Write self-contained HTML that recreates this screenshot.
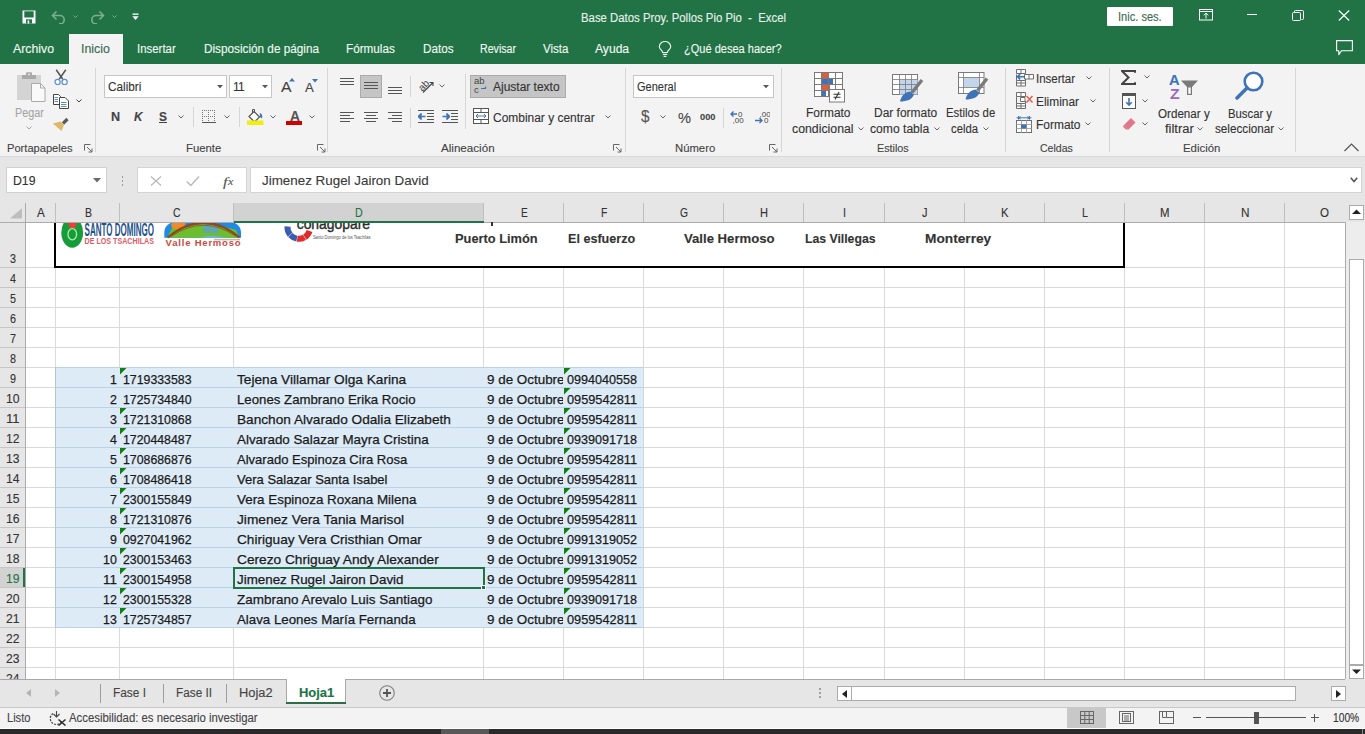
<!DOCTYPE html>
<html><head><meta charset="utf-8"><title>Excel</title>
<style>
html,body{margin:0;padding:0;}
body{width:1365px;height:734px;overflow:hidden;position:relative;background:#F3F3F3;font-family:'Liberation Sans', sans-serif;}
body>div,body>svg{position:absolute;box-sizing:border-box;}
.t{white-space:pre;transform-origin:0 0;-webkit-text-stroke:0.12px;}
</style></head><body>
<div style="left:0px;top:0px;width:1365px;height:64px;background:#217346;"></div>
<div style="left:69px;top:34px;width:54px;height:30px;background:#F3F3F3;"></div>
<div class="t" style="left:581.00px;top:11.64px;font-size:12px;line-height:12px;color:#E9F1EC;font-weight:normal;transform:scaleX(0.9467);">Base Datos Proy. Pollos Pio Pio  -  Excel</div>
<div style="left:1107px;top:7px;width:66px;height:19px;background:#FFFFFF;border-radius:1px"></div>
<div class="t" style="left:1118.00px;top:10.64px;font-size:12px;line-height:12px;color:#3D6B50;font-weight:normal;transform:scaleX(0.9227);">Inic. ses.</div>
<div class="t" style="left:13.00px;top:42.84px;font-size:12px;line-height:12px;color:#F2F8F3;font-weight:normal;transform:scaleX(1.0246);">Archivo</div>
<div class="t" style="left:81.00px;top:42.84px;font-size:12px;line-height:12px;color:#3B6A4F;font-weight:normal;transform:scaleX(1.0351);">Inicio</div>
<div class="t" style="left:137.30px;top:42.84px;font-size:12px;line-height:12px;color:#F2F8F3;font-weight:normal;transform:scaleX(0.9512);">Insertar</div>
<div class="t" style="left:203.70px;top:42.84px;font-size:12px;line-height:12px;color:#F2F8F3;font-weight:normal;transform:scaleX(0.9794);">Disposición de página</div>
<div class="t" style="left:346.40px;top:42.84px;font-size:12px;line-height:12px;color:#F2F8F3;font-weight:normal;transform:scaleX(0.9757);">Fórmulas</div>
<div class="t" style="left:422.50px;top:42.84px;font-size:12px;line-height:12px;color:#F2F8F3;font-weight:normal;transform:scaleX(0.9726);">Datos</div>
<div class="t" style="left:480.00px;top:42.84px;font-size:12px;line-height:12px;color:#F2F8F3;font-weight:normal;transform:scaleX(0.8848);">Revisar</div>
<div class="t" style="left:543.00px;top:42.84px;font-size:12px;line-height:12px;color:#F2F8F3;font-weight:normal;transform:scaleX(0.9596);">Vista</div>
<div class="t" style="left:595.30px;top:42.84px;font-size:12px;line-height:12px;color:#F2F8F3;font-weight:normal;transform:scaleX(1.0085);">Ayuda</div>
<div class="t" style="left:684.20px;top:42.84px;font-size:12px;line-height:12px;color:#F2F8F3;font-weight:normal;transform:scaleX(0.9201);">¿Qué desea hacer?</div>
<div style="left:0px;top:64px;width:1365px;height:92px;background:#F3F3F3;"></div>
<div style="left:0px;top:156px;width:1365px;height:1px;background:#D9D9D9;"></div>
<div style="left:0px;top:157px;width:1365px;height:46px;background:#E6E6E6;"></div>
<div style="left:95px;top:68px;width:1px;height:84px;background:#D6D6D6;"></div>
<div style="left:327px;top:68px;width:1px;height:84px;background:#D6D6D6;"></div>
<div style="left:625px;top:68px;width:1px;height:84px;background:#D6D6D6;"></div>
<div style="left:781px;top:68px;width:1px;height:84px;background:#D6D6D6;"></div>
<div style="left:1005px;top:68px;width:1px;height:84px;background:#D6D6D6;"></div>
<div style="left:1109px;top:68px;width:1px;height:84px;background:#D6D6D6;"></div>
<div style="left:1295px;top:68px;width:1px;height:84px;background:#D6D6D6;"></div>
<div class="t" style="left:6.50px;top:142.69px;font-size:11px;line-height:11px;color:#444444;font-weight:normal;transform:scaleX(1.0104);">Portapapeles</div>
<div class="t" style="left:185.50px;top:142.69px;font-size:11px;line-height:11px;color:#444444;font-weight:normal;transform:scaleX(1.0277);">Fuente</div>
<div class="t" style="left:441.20px;top:142.69px;font-size:11px;line-height:11px;color:#444444;font-weight:normal;transform:scaleX(1.0558);">Alineación</div>
<div class="t" style="left:675.00px;top:142.69px;font-size:11px;line-height:11px;color:#444444;font-weight:normal;transform:scaleX(1.0275);">Número</div>
<div class="t" style="left:877.30px;top:142.69px;font-size:11px;line-height:11px;color:#444444;font-weight:normal;transform:scaleX(0.9782);">Estilos</div>
<div class="t" style="left:1040.20px;top:142.69px;font-size:11px;line-height:11px;color:#444444;font-weight:normal;transform:scaleX(0.9577);">Celdas</div>
<div class="t" style="left:1183.30px;top:142.69px;font-size:11px;line-height:11px;color:#444444;font-weight:normal;transform:scaleX(1.0366);">Edición</div>
<div class="t" style="left:14.60px;top:106.84px;font-size:12px;line-height:12px;color:#A6A6A6;font-weight:normal;transform:scaleX(0.9022);">Pegar</div>
<svg style="left:26.0px;top:126.25px;" width="6" height="3.5" viewBox="0 0 6 3.5"><polyline points="0.5,0.5 3.0,3.0 5.5,0.5" fill="none" stroke="#A6A6A6" stroke-width="1"/></svg>
<svg style="left:76.0px;top:99.25px;" width="6" height="3.5" viewBox="0 0 6 3.5"><polyline points="0.5,0.5 3.0,3.0 5.5,0.5" fill="none" stroke="#444" stroke-width="1"/></svg>
<div style="left:104px;top:75px;width:123px;height:23px;background:#FFFFFF;border:1px solid #C6C6C6"></div>
<div class="t" style="left:107.70px;top:80.54px;font-size:12px;line-height:12px;color:#333333;font-weight:normal;transform:scaleX(0.9790);">Calibri</div>
<div style="left:229px;top:75px;width:43px;height:23px;background:#FFFFFF;border:1px solid #C6C6C6"></div>
<div class="t" style="left:233.00px;top:80.54px;font-size:12px;line-height:12px;color:#333333;font-weight:normal;letter-spacing:-0.9px;">11</div>
<div class="t" style="left:110.50px;top:110.84px;font-size:12px;line-height:12px;color:#444;font-weight:bold;transform:scaleX(1.0494);">N</div>
<div class="t" style="left:134.00px;top:110.84px;font-size:12px;line-height:12px;color:#444;font-weight:bold;transform:scaleX(0.9802);font-style:italic;">K</div>
<div class="t" style="left:159.00px;top:110.84px;font-size:12px;line-height:12px;color:#444;font-weight:bold;transform:scaleX(0.9981);">S</div>
<div style="left:159px;top:122px;width:8px;height:1px;background:#444;"></div>
<svg style="left:178.0px;top:115.25px;" width="6" height="3.5" viewBox="0 0 6 3.5"><polyline points="0.5,0.5 3.0,3.0 5.5,0.5" fill="none" stroke="#666" stroke-width="1"/></svg>
<svg style="left:224.0px;top:115.25px;" width="6" height="3.5" viewBox="0 0 6 3.5"><polyline points="0.5,0.5 3.0,3.0 5.5,0.5" fill="none" stroke="#666" stroke-width="1"/></svg>
<svg style="left:270.0px;top:115.25px;" width="6" height="3.5" viewBox="0 0 6 3.5"><polyline points="0.5,0.5 3.0,3.0 5.5,0.5" fill="none" stroke="#666" stroke-width="1"/></svg>
<svg style="left:309.0px;top:115.25px;" width="6" height="3.5" viewBox="0 0 6 3.5"><polyline points="0.5,0.5 3.0,3.0 5.5,0.5" fill="none" stroke="#666" stroke-width="1"/></svg>
<div style="left:193px;top:107px;width:1px;height:20px;background:#D6D6D6;"></div>
<div style="left:239px;top:107px;width:1px;height:20px;background:#D6D6D6;"></div>
<div style="left:360px;top:75px;width:22px;height:23px;background:#C5C5C5;border:1px solid #ABABAB"></div>
<div style="left:470px;top:75px;width:96px;height:23px;background:#C5C5C5;border:1px solid #ABABAB"></div>
<div class="t" style="left:492.60px;top:81.14px;font-size:12px;line-height:12px;color:#333333;font-weight:normal;transform:scaleX(0.9985);">Ajustar texto</div>
<div class="t" style="left:492.60px;top:112.34px;font-size:12px;line-height:12px;color:#333333;font-weight:normal;transform:scaleX(0.9966);">Combinar y centrar</div>
<svg style="left:605.4px;top:115.25px;" width="6" height="3.5" viewBox="0 0 6 3.5"><polyline points="0.5,0.5 3.0,3.0 5.5,0.5" fill="none" stroke="#666" stroke-width="1"/></svg>
<svg style="left:439.0px;top:84.25px;" width="6" height="3.5" viewBox="0 0 6 3.5"><polyline points="0.5,0.5 3.0,3.0 5.5,0.5" fill="none" stroke="#666" stroke-width="1"/></svg>
<div style="left:410px;top:76px;width:1px;height:21px;background:#D6D6D6;"></div>
<div style="left:410px;top:108px;width:1px;height:20px;background:#D6D6D6;"></div>
<div style="left:465px;top:74px;width:1px;height:55px;background:#D6D6D6;"></div>
<div style="left:633px;top:75px;width:141px;height:23px;background:#FFFFFF;border:1px solid #C6C6C6"></div>
<div class="t" style="left:637.00px;top:80.64px;font-size:12px;line-height:12px;color:#333333;font-weight:normal;transform:scaleX(0.9180);">General</div>
<svg style="left:659.5px;top:115.25px;" width="6" height="3.5" viewBox="0 0 6 3.5"><polyline points="0.5,0.5 3.0,3.0 5.5,0.5" fill="none" stroke="#666" stroke-width="1"/></svg>
<div style="left:723px;top:108px;width:1px;height:20px;background:#D6D6D6;"></div>
<div class="t" style="left:805.80px;top:107.04px;font-size:12px;line-height:12px;color:#333333;font-weight:normal;transform:scaleX(0.9958);">Formato</div>
<div class="t" style="left:792.20px;top:123.04px;font-size:12px;line-height:12px;color:#333333;font-weight:normal;transform:scaleX(1.0259);">condicional</div>
<svg style="left:858.0px;top:127.25px;" width="6" height="3.5" viewBox="0 0 6 3.5"><polyline points="0.5,0.5 3.0,3.0 5.5,0.5" fill="none" stroke="#666" stroke-width="1"/></svg>
<div class="t" style="left:873.80px;top:107.04px;font-size:12px;line-height:12px;color:#333333;font-weight:normal;transform:scaleX(0.9975);">Dar formato</div>
<div class="t" style="left:870.30px;top:123.04px;font-size:12px;line-height:12px;color:#333333;font-weight:normal;transform:scaleX(1.0102);">como tabla</div>
<svg style="left:933.6px;top:127.25px;" width="6" height="3.5" viewBox="0 0 6 3.5"><polyline points="0.5,0.5 3.0,3.0 5.5,0.5" fill="none" stroke="#666" stroke-width="1"/></svg>
<div class="t" style="left:946.00px;top:107.04px;font-size:12px;line-height:12px;color:#333333;font-weight:normal;transform:scaleX(0.9456);">Estilos de</div>
<div class="t" style="left:951.00px;top:123.04px;font-size:12px;line-height:12px;color:#333333;font-weight:normal;transform:scaleX(0.9412);">celda</div>
<svg style="left:982.8px;top:127.25px;" width="6" height="3.5" viewBox="0 0 6 3.5"><polyline points="0.5,0.5 3.0,3.0 5.5,0.5" fill="none" stroke="#666" stroke-width="1"/></svg>
<div class="t" style="left:1036.00px;top:73.04px;font-size:12px;line-height:12px;color:#333333;font-weight:normal;transform:scaleX(0.9585);">Insertar</div>
<div class="t" style="left:1036.00px;top:95.84px;font-size:12px;line-height:12px;color:#333333;font-weight:normal;transform:scaleX(0.9921);">Eliminar</div>
<div class="t" style="left:1036.00px;top:118.74px;font-size:12px;line-height:12px;color:#333333;font-weight:normal;transform:scaleX(0.9958);">Formato</div>
<svg style="left:1086.0px;top:76.25px;" width="6" height="3.5" viewBox="0 0 6 3.5"><polyline points="0.5,0.5 3.0,3.0 5.5,0.5" fill="none" stroke="#666" stroke-width="1"/></svg>
<svg style="left:1090.0px;top:99.25px;" width="6" height="3.5" viewBox="0 0 6 3.5"><polyline points="0.5,0.5 3.0,3.0 5.5,0.5" fill="none" stroke="#666" stroke-width="1"/></svg>
<svg style="left:1084.6px;top:122.25px;" width="6" height="3.5" viewBox="0 0 6 3.5"><polyline points="0.5,0.5 3.0,3.0 5.5,0.5" fill="none" stroke="#666" stroke-width="1"/></svg>
<svg style="left:1144.0px;top:75.25px;" width="6" height="3.5" viewBox="0 0 6 3.5"><polyline points="0.5,0.5 3.0,3.0 5.5,0.5" fill="none" stroke="#666" stroke-width="1"/></svg>
<svg style="left:1142.0px;top:99.25px;" width="6" height="3.5" viewBox="0 0 6 3.5"><polyline points="0.5,0.5 3.0,3.0 5.5,0.5" fill="none" stroke="#666" stroke-width="1"/></svg>
<svg style="left:1142.0px;top:122.25px;" width="6" height="3.5" viewBox="0 0 6 3.5"><polyline points="0.5,0.5 3.0,3.0 5.5,0.5" fill="none" stroke="#666" stroke-width="1"/></svg>
<div class="t" style="left:1158.20px;top:107.54px;font-size:12px;line-height:12px;color:#333333;font-weight:normal;transform:scaleX(0.9689);">Ordenar y</div>
<div class="t" style="left:1164.70px;top:123.24px;font-size:12px;line-height:12px;color:#333333;font-weight:normal;transform:scaleX(1.0798);">filtrar</div>
<svg style="left:1197.0px;top:127.25px;" width="6" height="3.5" viewBox="0 0 6 3.5"><polyline points="0.5,0.5 3.0,3.0 5.5,0.5" fill="none" stroke="#666" stroke-width="1"/></svg>
<div class="t" style="left:1228.00px;top:107.54px;font-size:12px;line-height:12px;color:#333333;font-weight:normal;transform:scaleX(0.9424);">Buscar y</div>
<div class="t" style="left:1214.90px;top:123.24px;font-size:12px;line-height:12px;color:#333333;font-weight:normal;transform:scaleX(0.9752);">seleccionar</div>
<svg style="left:1278.0px;top:127.25px;" width="6" height="3.5" viewBox="0 0 6 3.5"><polyline points="0.5,0.5 3.0,3.0 5.5,0.5" fill="none" stroke="#666" stroke-width="1"/></svg>
<svg style="left:1344px;top:143px;" width="15" height="9" viewBox="0 0 15 9"><polyline points="0.5,8 7.5,1 14.5,8" fill="none" stroke="#555" stroke-width="1.2"/></svg>
<div style="left:6px;top:167px;width:101px;height:26px;background:#FFFFFF;border:1px solid #D0D0D0"></div>
<div class="t" style="left:12.50px;top:174.94px;font-size:12px;line-height:12px;color:#333333;font-weight:normal;transform:scaleX(1.0220);">D19</div>
<svg style="left:93px;top:178px;" width="8" height="5" viewBox="0 0 8 5"><polygon points="0,0 8,0 4,4.5" fill="#6A6A6A"/></svg>
<div style="left:121.5px;top:176px;width:1.5px;height:1.5px;background:#9A9A9A;"></div>
<div style="left:121.5px;top:180px;width:1.5px;height:1.5px;background:#9A9A9A;"></div>
<div style="left:121.5px;top:184px;width:1.5px;height:1.5px;background:#9A9A9A;"></div>
<div style="left:137px;top:167px;width:110px;height:26px;background:#FFFFFF;border:1px solid #D4D4D4"></div>
<div style="left:250px;top:167px;width:1112px;height:26px;background:#FFFFFF;border:1px solid #D4D4D4"></div>
<div class="t" style="left:262.10px;top:173.80px;font-size:13px;line-height:13px;color:#3A3A3A;font-weight:normal;transform:scaleX(1.0299);">Jimenez Rugel Jairon David</div>
<svg style="left:1350px;top:177px;" width="8" height="6" viewBox="0 0 8 6"><polyline points="0.8,0.8 4,4.5 7.2,0.8" fill="none" stroke="#555" stroke-width="1.6"/></svg>
<div style="left:0px;top:203px;width:1365px;height:19px;background:#E6E6E6;"></div>
<div style="left:0px;top:222px;width:1345px;height:457px;background:#FFFFFF;"></div>
<div style="left:0px;top:222px;width:25px;height:457px;background:#E6E6E6;"></div>
<div style="left:26px;top:267px;width:1319px;height:1px;background:#DADADA;"></div>
<div style="left:26px;top:287px;width:1319px;height:1px;background:#DADADA;"></div>
<div style="left:26px;top:307px;width:1319px;height:1px;background:#DADADA;"></div>
<div style="left:26px;top:327px;width:1319px;height:1px;background:#DADADA;"></div>
<div style="left:26px;top:347px;width:1319px;height:1px;background:#DADADA;"></div>
<div style="left:26px;top:367px;width:1319px;height:1px;background:#DADADA;"></div>
<div style="left:26px;top:387px;width:1319px;height:1px;background:#DADADA;"></div>
<div style="left:26px;top:407px;width:1319px;height:1px;background:#DADADA;"></div>
<div style="left:26px;top:427px;width:1319px;height:1px;background:#DADADA;"></div>
<div style="left:26px;top:447px;width:1319px;height:1px;background:#DADADA;"></div>
<div style="left:26px;top:467px;width:1319px;height:1px;background:#DADADA;"></div>
<div style="left:26px;top:487px;width:1319px;height:1px;background:#DADADA;"></div>
<div style="left:26px;top:507px;width:1319px;height:1px;background:#DADADA;"></div>
<div style="left:26px;top:527px;width:1319px;height:1px;background:#DADADA;"></div>
<div style="left:26px;top:547px;width:1319px;height:1px;background:#DADADA;"></div>
<div style="left:26px;top:567px;width:1319px;height:1px;background:#DADADA;"></div>
<div style="left:26px;top:587px;width:1319px;height:1px;background:#DADADA;"></div>
<div style="left:26px;top:607px;width:1319px;height:1px;background:#DADADA;"></div>
<div style="left:26px;top:627px;width:1319px;height:1px;background:#DADADA;"></div>
<div style="left:26px;top:647px;width:1319px;height:1px;background:#DADADA;"></div>
<div style="left:26px;top:667px;width:1319px;height:1px;background:#DADADA;"></div>
<div style="left:55px;top:223px;width:1px;height:456px;background:#DADADA;"></div>
<div style="left:119px;top:223px;width:1px;height:456px;background:#DADADA;"></div>
<div style="left:233px;top:223px;width:1px;height:456px;background:#DADADA;"></div>
<div style="left:483px;top:223px;width:1px;height:456px;background:#DADADA;"></div>
<div style="left:563px;top:223px;width:1px;height:456px;background:#DADADA;"></div>
<div style="left:643px;top:223px;width:1px;height:456px;background:#DADADA;"></div>
<div style="left:723px;top:223px;width:1px;height:456px;background:#DADADA;"></div>
<div style="left:803px;top:223px;width:1px;height:456px;background:#DADADA;"></div>
<div style="left:884px;top:223px;width:1px;height:456px;background:#DADADA;"></div>
<div style="left:964px;top:223px;width:1px;height:456px;background:#DADADA;"></div>
<div style="left:1044px;top:223px;width:1px;height:456px;background:#DADADA;"></div>
<div style="left:1124px;top:223px;width:1px;height:456px;background:#DADADA;"></div>
<div style="left:1204px;top:223px;width:1px;height:456px;background:#DADADA;"></div>
<div style="left:1284px;top:223px;width:1px;height:456px;background:#DADADA;"></div>
<div style="left:56px;top:223px;width:1067px;height:44px;background:#FFFFFF;"></div>
<div style="left:56px;top:367px;width:588px;height:261px;background:#DDEBF7;"></div>
<div style="left:56px;top:367px;width:588px;height:1px;background:#BDD1E4;"></div>
<div style="left:56px;top:387px;width:588px;height:1px;background:#BDD1E4;"></div>
<div style="left:56px;top:407px;width:588px;height:1px;background:#BDD1E4;"></div>
<div style="left:56px;top:427px;width:588px;height:1px;background:#BDD1E4;"></div>
<div style="left:56px;top:447px;width:588px;height:1px;background:#BDD1E4;"></div>
<div style="left:56px;top:467px;width:588px;height:1px;background:#BDD1E4;"></div>
<div style="left:56px;top:487px;width:588px;height:1px;background:#BDD1E4;"></div>
<div style="left:56px;top:507px;width:588px;height:1px;background:#BDD1E4;"></div>
<div style="left:56px;top:527px;width:588px;height:1px;background:#BDD1E4;"></div>
<div style="left:56px;top:547px;width:588px;height:1px;background:#BDD1E4;"></div>
<div style="left:56px;top:567px;width:588px;height:1px;background:#BDD1E4;"></div>
<div style="left:56px;top:587px;width:588px;height:1px;background:#BDD1E4;"></div>
<div style="left:56px;top:607px;width:588px;height:1px;background:#BDD1E4;"></div>
<div style="left:56px;top:627px;width:588px;height:1px;background:#BDD1E4;"></div>
<div style="left:55px;top:367px;width:1px;height:261px;background:#B3C6D6;"></div>
<div style="left:643px;top:367px;width:1px;height:261px;background:#C9D9E6;"></div>
<div style="left:54px;top:223px;width:2px;height:45px;background:#000000;"></div>
<div style="left:54px;top:266px;width:1071px;height:2px;background:#000000;"></div>
<div style="left:1123px;top:223px;width:2px;height:45px;background:#000000;"></div>
<div style="left:234px;top:203px;width:250px;height:19px;background:#D2D2D2;"></div>
<div style="left:55px;top:203px;width:1px;height:19px;background:#BFBFBF;"></div>
<div style="left:119px;top:203px;width:1px;height:19px;background:#BFBFBF;"></div>
<div style="left:233px;top:203px;width:1px;height:19px;background:#BFBFBF;"></div>
<div style="left:483px;top:203px;width:1px;height:19px;background:#BFBFBF;"></div>
<div style="left:563px;top:203px;width:1px;height:19px;background:#BFBFBF;"></div>
<div style="left:643px;top:203px;width:1px;height:19px;background:#BFBFBF;"></div>
<div style="left:723px;top:203px;width:1px;height:19px;background:#BFBFBF;"></div>
<div style="left:803px;top:203px;width:1px;height:19px;background:#BFBFBF;"></div>
<div style="left:884px;top:203px;width:1px;height:19px;background:#BFBFBF;"></div>
<div style="left:964px;top:203px;width:1px;height:19px;background:#BFBFBF;"></div>
<div style="left:1044px;top:203px;width:1px;height:19px;background:#BFBFBF;"></div>
<div style="left:1124px;top:203px;width:1px;height:19px;background:#BFBFBF;"></div>
<div style="left:1204px;top:203px;width:1px;height:19px;background:#BFBFBF;"></div>
<div style="left:1284px;top:203px;width:1px;height:19px;background:#BFBFBF;"></div>
<div style="left:25px;top:203px;width:1px;height:476px;background:#ABABAB;"></div>
<div style="left:0px;top:222px;width:1345px;height:1px;background:#ABABAB;"></div>
<div style="left:234px;top:221px;width:250px;height:2px;background:#217346;"></div>
<svg style="left:10px;top:208px;" width="12" height="10.5" viewBox="0 0 12 10.5"><polygon points="12,0 12,10.5 0,10.5" fill="#BDBDBD"/></svg>
<div class="t" style="left:37.10px;top:206.74px;font-size:12px;line-height:12px;color:#333333;font-weight:normal;transform:scaleX(0.9731);">A</div>
<div class="t" style="left:84.50px;top:206.74px;font-size:12px;line-height:12px;color:#333333;font-weight:normal;transform:scaleX(0.8733);">B</div>
<div class="t" style="left:173.25px;top:206.74px;font-size:12px;line-height:12px;color:#333333;font-weight:normal;transform:scaleX(0.8649);">C</div>
<div class="t" style="left:355.15px;top:206.74px;font-size:12px;line-height:12px;color:#217346;font-weight:normal;transform:scaleX(0.8879);">D</div>
<div class="t" style="left:520.60px;top:206.74px;font-size:12px;line-height:12px;color:#333333;font-weight:normal;transform:scaleX(0.8483);">E</div>
<div class="t" style="left:600.85px;top:206.74px;font-size:12px;line-height:12px;color:#333333;font-weight:normal;transform:scaleX(0.8579);">F</div>
<div class="t" style="left:680.00px;top:206.74px;font-size:12px;line-height:12px;color:#333333;font-weight:normal;transform:scaleX(0.8562);">G</div>
<div class="t" style="left:760.00px;top:206.74px;font-size:12px;line-height:12px;color:#333333;font-weight:normal;transform:scaleX(0.9225);">H</div>
<div class="t" style="left:843.00px;top:206.74px;font-size:12px;line-height:12px;color:#333333;font-weight:normal;transform:scaleX(0.8972);">I</div>
<div class="t" style="left:922.25px;top:206.74px;font-size:12px;line-height:12px;color:#333333;font-weight:normal;transform:scaleX(0.9167);">J</div>
<div class="t" style="left:1001.25px;top:206.74px;font-size:12px;line-height:12px;color:#333333;font-weight:normal;transform:scaleX(0.9357);">K</div>
<div class="t" style="left:1082.00px;top:206.74px;font-size:12px;line-height:12px;color:#333333;font-weight:normal;transform:scaleX(0.8972);">L</div>
<div class="t" style="left:1160.25px;top:206.74px;font-size:12px;line-height:12px;color:#333333;font-weight:normal;transform:scaleX(0.9500);">M</div>
<div class="t" style="left:1240.75px;top:206.74px;font-size:12px;line-height:12px;color:#333333;font-weight:normal;transform:scaleX(0.9802);">N</div>
<div class="t" style="left:1320.00px;top:206.74px;font-size:12px;line-height:12px;color:#333333;font-weight:normal;transform:scaleX(0.9632);">O</div>
<div style="left:0px;top:267px;width:25px;height:1px;background:#C6C6C6;"></div>
<div class="t" style="left:10.00px;top:252.84px;font-size:12px;line-height:12px;color:#333333;font-weight:normal;transform:scaleX(0.8972);">3</div>
<div style="left:0px;top:287px;width:25px;height:1px;background:#C6C6C6;"></div>
<div class="t" style="left:10.00px;top:272.84px;font-size:12px;line-height:12px;color:#333333;font-weight:normal;transform:scaleX(0.8972);">4</div>
<div style="left:0px;top:307px;width:25px;height:1px;background:#C6C6C6;"></div>
<div class="t" style="left:10.00px;top:292.84px;font-size:12px;line-height:12px;color:#333333;font-weight:normal;transform:scaleX(0.8972);">5</div>
<div style="left:0px;top:327px;width:25px;height:1px;background:#C6C6C6;"></div>
<div class="t" style="left:10.00px;top:312.84px;font-size:12px;line-height:12px;color:#333333;font-weight:normal;transform:scaleX(0.8972);">6</div>
<div style="left:0px;top:347px;width:25px;height:1px;background:#C6C6C6;"></div>
<div class="t" style="left:10.00px;top:332.84px;font-size:12px;line-height:12px;color:#333333;font-weight:normal;transform:scaleX(0.8972);">7</div>
<div style="left:0px;top:367px;width:25px;height:1px;background:#C6C6C6;"></div>
<div class="t" style="left:10.00px;top:352.84px;font-size:12px;line-height:12px;color:#333333;font-weight:normal;transform:scaleX(0.8972);">8</div>
<div style="left:0px;top:387px;width:25px;height:1px;background:#C6C6C6;"></div>
<div class="t" style="left:10.00px;top:372.84px;font-size:12px;line-height:12px;color:#333333;font-weight:normal;transform:scaleX(0.8972);">9</div>
<div style="left:0px;top:407px;width:25px;height:1px;background:#C6C6C6;"></div>
<div class="t" style="left:6.25px;top:392.84px;font-size:12px;line-height:12px;color:#333333;font-weight:normal;transform:scaleX(1.0105);">10</div>
<div style="left:0px;top:427px;width:25px;height:1px;background:#C6C6C6;"></div>
<div class="t" style="left:6.25px;top:412.84px;font-size:12px;line-height:12px;color:#333333;font-weight:normal;transform:scaleX(1.0827);">11</div>
<div style="left:0px;top:447px;width:25px;height:1px;background:#C6C6C6;"></div>
<div class="t" style="left:6.25px;top:432.84px;font-size:12px;line-height:12px;color:#333333;font-weight:normal;transform:scaleX(1.0105);">12</div>
<div style="left:0px;top:467px;width:25px;height:1px;background:#C6C6C6;"></div>
<div class="t" style="left:6.25px;top:452.84px;font-size:12px;line-height:12px;color:#333333;font-weight:normal;transform:scaleX(1.0105);">13</div>
<div style="left:0px;top:487px;width:25px;height:1px;background:#C6C6C6;"></div>
<div class="t" style="left:6.25px;top:472.84px;font-size:12px;line-height:12px;color:#333333;font-weight:normal;transform:scaleX(1.0105);">14</div>
<div style="left:0px;top:507px;width:25px;height:1px;background:#C6C6C6;"></div>
<div class="t" style="left:6.25px;top:492.84px;font-size:12px;line-height:12px;color:#333333;font-weight:normal;transform:scaleX(1.0105);">15</div>
<div style="left:0px;top:527px;width:25px;height:1px;background:#C6C6C6;"></div>
<div class="t" style="left:6.25px;top:512.84px;font-size:12px;line-height:12px;color:#333333;font-weight:normal;transform:scaleX(1.0105);">16</div>
<div style="left:0px;top:547px;width:25px;height:1px;background:#C6C6C6;"></div>
<div class="t" style="left:6.25px;top:532.84px;font-size:12px;line-height:12px;color:#333333;font-weight:normal;transform:scaleX(1.0105);">17</div>
<div style="left:0px;top:567px;width:25px;height:1px;background:#C6C6C6;"></div>
<div class="t" style="left:6.25px;top:552.84px;font-size:12px;line-height:12px;color:#333333;font-weight:normal;transform:scaleX(1.0105);">18</div>
<div style="left:0px;top:568px;width:25px;height:20px;background:#D2D2D2;"></div>
<div style="left:23px;top:568px;width:2px;height:20px;background:#217346;"></div>
<div style="left:0px;top:587px;width:25px;height:1px;background:#C6C6C6;"></div>
<div class="t" style="left:6.25px;top:572.84px;font-size:12px;line-height:12px;color:#217346;font-weight:normal;transform:scaleX(1.0105);">19</div>
<div style="left:0px;top:607px;width:25px;height:1px;background:#C6C6C6;"></div>
<div class="t" style="left:6.25px;top:592.84px;font-size:12px;line-height:12px;color:#333333;font-weight:normal;transform:scaleX(1.0105);">20</div>
<div style="left:0px;top:627px;width:25px;height:1px;background:#C6C6C6;"></div>
<div class="t" style="left:6.25px;top:612.84px;font-size:12px;line-height:12px;color:#333333;font-weight:normal;transform:scaleX(1.0105);">21</div>
<div style="left:0px;top:647px;width:25px;height:1px;background:#C6C6C6;"></div>
<div class="t" style="left:6.25px;top:632.84px;font-size:12px;line-height:12px;color:#333333;font-weight:normal;transform:scaleX(1.0105);">22</div>
<div style="left:0px;top:667px;width:25px;height:1px;background:#C6C6C6;"></div>
<div class="t" style="left:6.25px;top:652.84px;font-size:12px;line-height:12px;color:#333333;font-weight:normal;transform:scaleX(1.0105);">23</div>
<div class="t" style="left:6.25px;top:672.84px;font-size:12px;line-height:12px;color:#333333;font-weight:normal;transform:scaleX(1.0105);clip-path:inset(0 0 5.8px 0);">24</div>
<div class="t" style="left:109.60px;top:372.57px;font-size:13.5px;line-height:13.5px;color:#1A1A1A;font-weight:normal;transform:scaleX(0.9181);-webkit-text-stroke:0.25px #1A1A1A;">1</div>
<div class="t" style="left:123.00px;top:372.57px;font-size:13.5px;line-height:13.5px;color:#1A1A1A;font-weight:normal;transform:scaleX(0.9122);-webkit-text-stroke:0.25px #1A1A1A;">1719333583</div>
<div class="t" style="left:237.30px;top:372.57px;font-size:13.5px;line-height:13.5px;color:#1A1A1A;font-weight:normal;transform:scaleX(1.0126);-webkit-text-stroke:0.25px #1A1A1A;">Tejena Villamar Olga Karina</div>
<div class="t" style="left:486.80px;top:372.57px;font-size:13.5px;line-height:13.5px;color:#1A1A1A;font-weight:normal;transform:scaleX(0.9930);-webkit-text-stroke:0.25px #1A1A1A;clip-path:inset(0 1.5px 0 0);">9 de Octubre</div>
<div class="t" style="left:566.50px;top:372.57px;font-size:13.5px;line-height:13.5px;color:#1A1A1A;font-weight:normal;transform:scaleX(0.9322);-webkit-text-stroke:0.25px #1A1A1A;">0994040558</div>
<svg style="left:120px;top:368px;" width="6.5" height="6.5" viewBox="0 0 6.5 6.5"><polygon points="0,0 6.5,0 0,6.5" fill="#0F7F12"/></svg>
<svg style="left:564px;top:368px;" width="6.5" height="6.5" viewBox="0 0 6.5 6.5"><polygon points="0,0 6.5,0 0,6.5" fill="#0F7F12"/></svg>
<div class="t" style="left:109.60px;top:392.57px;font-size:13.5px;line-height:13.5px;color:#1A1A1A;font-weight:normal;transform:scaleX(0.9181);-webkit-text-stroke:0.25px #1A1A1A;">2</div>
<div class="t" style="left:123.00px;top:392.57px;font-size:13.5px;line-height:13.5px;color:#1A1A1A;font-weight:normal;transform:scaleX(0.9122);-webkit-text-stroke:0.25px #1A1A1A;">1725734840</div>
<div class="t" style="left:237.30px;top:392.57px;font-size:13.5px;line-height:13.5px;color:#1A1A1A;font-weight:normal;transform:scaleX(0.9795);-webkit-text-stroke:0.25px #1A1A1A;">Leones Zambrano Erika Rocio</div>
<div class="t" style="left:486.80px;top:392.57px;font-size:13.5px;line-height:13.5px;color:#1A1A1A;font-weight:normal;transform:scaleX(0.9930);-webkit-text-stroke:0.25px #1A1A1A;clip-path:inset(0 1.5px 0 0);">9 de Octubre</div>
<div class="t" style="left:566.50px;top:392.57px;font-size:13.5px;line-height:13.5px;color:#1A1A1A;font-weight:normal;transform:scaleX(0.9447);-webkit-text-stroke:0.25px #1A1A1A;">0959542811</div>
<svg style="left:564px;top:388px;" width="6.5" height="6.5" viewBox="0 0 6.5 6.5"><polygon points="0,0 6.5,0 0,6.5" fill="#0F7F12"/></svg>
<div class="t" style="left:109.60px;top:412.57px;font-size:13.5px;line-height:13.5px;color:#1A1A1A;font-weight:normal;transform:scaleX(0.9181);-webkit-text-stroke:0.25px #1A1A1A;">3</div>
<div class="t" style="left:123.00px;top:412.57px;font-size:13.5px;line-height:13.5px;color:#1A1A1A;font-weight:normal;transform:scaleX(0.9122);-webkit-text-stroke:0.25px #1A1A1A;">1721310868</div>
<div class="t" style="left:237.30px;top:412.57px;font-size:13.5px;line-height:13.5px;color:#1A1A1A;font-weight:normal;transform:scaleX(1.0106);-webkit-text-stroke:0.25px #1A1A1A;">Banchon Alvarado Odalia Elizabeth</div>
<div class="t" style="left:486.80px;top:412.57px;font-size:13.5px;line-height:13.5px;color:#1A1A1A;font-weight:normal;transform:scaleX(0.9930);-webkit-text-stroke:0.25px #1A1A1A;clip-path:inset(0 1.5px 0 0);">9 de Octubre</div>
<div class="t" style="left:566.50px;top:412.57px;font-size:13.5px;line-height:13.5px;color:#1A1A1A;font-weight:normal;transform:scaleX(0.9447);-webkit-text-stroke:0.25px #1A1A1A;">0959542811</div>
<svg style="left:120px;top:408px;" width="6.5" height="6.5" viewBox="0 0 6.5 6.5"><polygon points="0,0 6.5,0 0,6.5" fill="#0F7F12"/></svg>
<svg style="left:564px;top:408px;" width="6.5" height="6.5" viewBox="0 0 6.5 6.5"><polygon points="0,0 6.5,0 0,6.5" fill="#0F7F12"/></svg>
<div class="t" style="left:109.60px;top:432.57px;font-size:13.5px;line-height:13.5px;color:#1A1A1A;font-weight:normal;transform:scaleX(0.9181);-webkit-text-stroke:0.25px #1A1A1A;">4</div>
<div class="t" style="left:123.00px;top:432.57px;font-size:13.5px;line-height:13.5px;color:#1A1A1A;font-weight:normal;transform:scaleX(0.9122);-webkit-text-stroke:0.25px #1A1A1A;">1720448487</div>
<div class="t" style="left:237.30px;top:432.57px;font-size:13.5px;line-height:13.5px;color:#1A1A1A;font-weight:normal;transform:scaleX(0.9898);-webkit-text-stroke:0.25px #1A1A1A;">Alvarado Salazar Mayra Cristina</div>
<div class="t" style="left:486.80px;top:432.57px;font-size:13.5px;line-height:13.5px;color:#1A1A1A;font-weight:normal;transform:scaleX(0.9930);-webkit-text-stroke:0.25px #1A1A1A;clip-path:inset(0 1.5px 0 0);">9 de Octubre</div>
<div class="t" style="left:566.50px;top:432.57px;font-size:13.5px;line-height:13.5px;color:#1A1A1A;font-weight:normal;transform:scaleX(0.9322);-webkit-text-stroke:0.25px #1A1A1A;">0939091718</div>
<svg style="left:120px;top:428px;" width="6.5" height="6.5" viewBox="0 0 6.5 6.5"><polygon points="0,0 6.5,0 0,6.5" fill="#0F7F12"/></svg>
<svg style="left:564px;top:428px;" width="6.5" height="6.5" viewBox="0 0 6.5 6.5"><polygon points="0,0 6.5,0 0,6.5" fill="#0F7F12"/></svg>
<div class="t" style="left:109.60px;top:452.57px;font-size:13.5px;line-height:13.5px;color:#1A1A1A;font-weight:normal;transform:scaleX(0.9181);-webkit-text-stroke:0.25px #1A1A1A;">5</div>
<div class="t" style="left:123.00px;top:452.57px;font-size:13.5px;line-height:13.5px;color:#1A1A1A;font-weight:normal;transform:scaleX(0.9122);-webkit-text-stroke:0.25px #1A1A1A;">1708686876</div>
<div class="t" style="left:237.30px;top:452.57px;font-size:13.5px;line-height:13.5px;color:#1A1A1A;font-weight:normal;transform:scaleX(0.9657);-webkit-text-stroke:0.25px #1A1A1A;">Alvarado Espinoza Cira Rosa</div>
<div class="t" style="left:486.80px;top:452.57px;font-size:13.5px;line-height:13.5px;color:#1A1A1A;font-weight:normal;transform:scaleX(0.9930);-webkit-text-stroke:0.25px #1A1A1A;clip-path:inset(0 1.5px 0 0);">9 de Octubre</div>
<div class="t" style="left:566.50px;top:452.57px;font-size:13.5px;line-height:13.5px;color:#1A1A1A;font-weight:normal;transform:scaleX(0.9447);-webkit-text-stroke:0.25px #1A1A1A;">0959542811</div>
<svg style="left:120px;top:448px;" width="6.5" height="6.5" viewBox="0 0 6.5 6.5"><polygon points="0,0 6.5,0 0,6.5" fill="#0F7F12"/></svg>
<svg style="left:564px;top:448px;" width="6.5" height="6.5" viewBox="0 0 6.5 6.5"><polygon points="0,0 6.5,0 0,6.5" fill="#0F7F12"/></svg>
<div class="t" style="left:109.60px;top:472.57px;font-size:13.5px;line-height:13.5px;color:#1A1A1A;font-weight:normal;transform:scaleX(0.9181);-webkit-text-stroke:0.25px #1A1A1A;">6</div>
<div class="t" style="left:123.00px;top:472.57px;font-size:13.5px;line-height:13.5px;color:#1A1A1A;font-weight:normal;transform:scaleX(0.9122);-webkit-text-stroke:0.25px #1A1A1A;">1708486418</div>
<div class="t" style="left:237.30px;top:472.57px;font-size:13.5px;line-height:13.5px;color:#1A1A1A;font-weight:normal;transform:scaleX(0.9641);-webkit-text-stroke:0.25px #1A1A1A;">Vera Salazar Santa Isabel</div>
<div class="t" style="left:486.80px;top:472.57px;font-size:13.5px;line-height:13.5px;color:#1A1A1A;font-weight:normal;transform:scaleX(0.9930);-webkit-text-stroke:0.25px #1A1A1A;clip-path:inset(0 1.5px 0 0);">9 de Octubre</div>
<div class="t" style="left:566.50px;top:472.57px;font-size:13.5px;line-height:13.5px;color:#1A1A1A;font-weight:normal;transform:scaleX(0.9447);-webkit-text-stroke:0.25px #1A1A1A;">0959542811</div>
<svg style="left:120px;top:468px;" width="6.5" height="6.5" viewBox="0 0 6.5 6.5"><polygon points="0,0 6.5,0 0,6.5" fill="#0F7F12"/></svg>
<svg style="left:564px;top:468px;" width="6.5" height="6.5" viewBox="0 0 6.5 6.5"><polygon points="0,0 6.5,0 0,6.5" fill="#0F7F12"/></svg>
<div class="t" style="left:109.60px;top:492.57px;font-size:13.5px;line-height:13.5px;color:#1A1A1A;font-weight:normal;transform:scaleX(0.9181);-webkit-text-stroke:0.25px #1A1A1A;">7</div>
<div class="t" style="left:123.00px;top:492.57px;font-size:13.5px;line-height:13.5px;color:#1A1A1A;font-weight:normal;transform:scaleX(0.9122);-webkit-text-stroke:0.25px #1A1A1A;">2300155849</div>
<div class="t" style="left:237.30px;top:492.57px;font-size:13.5px;line-height:13.5px;color:#1A1A1A;font-weight:normal;transform:scaleX(0.9919);-webkit-text-stroke:0.25px #1A1A1A;">Vera Espinoza Roxana Milena</div>
<div class="t" style="left:486.80px;top:492.57px;font-size:13.5px;line-height:13.5px;color:#1A1A1A;font-weight:normal;transform:scaleX(0.9930);-webkit-text-stroke:0.25px #1A1A1A;clip-path:inset(0 1.5px 0 0);">9 de Octubre</div>
<div class="t" style="left:566.50px;top:492.57px;font-size:13.5px;line-height:13.5px;color:#1A1A1A;font-weight:normal;transform:scaleX(0.9447);-webkit-text-stroke:0.25px #1A1A1A;">0959542811</div>
<svg style="left:120px;top:488px;" width="6.5" height="6.5" viewBox="0 0 6.5 6.5"><polygon points="0,0 6.5,0 0,6.5" fill="#0F7F12"/></svg>
<svg style="left:564px;top:488px;" width="6.5" height="6.5" viewBox="0 0 6.5 6.5"><polygon points="0,0 6.5,0 0,6.5" fill="#0F7F12"/></svg>
<div class="t" style="left:109.60px;top:512.57px;font-size:13.5px;line-height:13.5px;color:#1A1A1A;font-weight:normal;transform:scaleX(0.9181);-webkit-text-stroke:0.25px #1A1A1A;">8</div>
<div class="t" style="left:123.00px;top:512.57px;font-size:13.5px;line-height:13.5px;color:#1A1A1A;font-weight:normal;transform:scaleX(0.9122);-webkit-text-stroke:0.25px #1A1A1A;">1721310876</div>
<div class="t" style="left:237.30px;top:512.57px;font-size:13.5px;line-height:13.5px;color:#1A1A1A;font-weight:normal;transform:scaleX(1.0138);-webkit-text-stroke:0.25px #1A1A1A;">Jimenez Vera Tania Marisol</div>
<div class="t" style="left:486.80px;top:512.57px;font-size:13.5px;line-height:13.5px;color:#1A1A1A;font-weight:normal;transform:scaleX(0.9930);-webkit-text-stroke:0.25px #1A1A1A;clip-path:inset(0 1.5px 0 0);">9 de Octubre</div>
<div class="t" style="left:566.50px;top:512.57px;font-size:13.5px;line-height:13.5px;color:#1A1A1A;font-weight:normal;transform:scaleX(0.9447);-webkit-text-stroke:0.25px #1A1A1A;">0959542811</div>
<svg style="left:120px;top:508px;" width="6.5" height="6.5" viewBox="0 0 6.5 6.5"><polygon points="0,0 6.5,0 0,6.5" fill="#0F7F12"/></svg>
<svg style="left:564px;top:508px;" width="6.5" height="6.5" viewBox="0 0 6.5 6.5"><polygon points="0,0 6.5,0 0,6.5" fill="#0F7F12"/></svg>
<div class="t" style="left:109.60px;top:532.57px;font-size:13.5px;line-height:13.5px;color:#1A1A1A;font-weight:normal;transform:scaleX(0.9181);-webkit-text-stroke:0.25px #1A1A1A;">9</div>
<div class="t" style="left:123.00px;top:532.57px;font-size:13.5px;line-height:13.5px;color:#1A1A1A;font-weight:normal;transform:scaleX(0.9122);-webkit-text-stroke:0.25px #1A1A1A;">0927041962</div>
<div class="t" style="left:237.30px;top:532.57px;font-size:13.5px;line-height:13.5px;color:#1A1A1A;font-weight:normal;transform:scaleX(1.0094);-webkit-text-stroke:0.25px #1A1A1A;">Chiriguay Vera Cristhian Omar</div>
<div class="t" style="left:486.80px;top:532.57px;font-size:13.5px;line-height:13.5px;color:#1A1A1A;font-weight:normal;transform:scaleX(0.9930);-webkit-text-stroke:0.25px #1A1A1A;clip-path:inset(0 1.5px 0 0);">9 de Octubre</div>
<div class="t" style="left:566.50px;top:532.57px;font-size:13.5px;line-height:13.5px;color:#1A1A1A;font-weight:normal;transform:scaleX(0.9322);-webkit-text-stroke:0.25px #1A1A1A;">0991319052</div>
<svg style="left:120px;top:528px;" width="6.5" height="6.5" viewBox="0 0 6.5 6.5"><polygon points="0,0 6.5,0 0,6.5" fill="#0F7F12"/></svg>
<svg style="left:564px;top:528px;" width="6.5" height="6.5" viewBox="0 0 6.5 6.5"><polygon points="0,0 6.5,0 0,6.5" fill="#0F7F12"/></svg>
<div class="t" style="left:102.70px;top:552.57px;font-size:13.5px;line-height:13.5px;color:#1A1A1A;font-weight:normal;transform:scaleX(0.9181);-webkit-text-stroke:0.25px #1A1A1A;">10</div>
<div class="t" style="left:123.00px;top:552.57px;font-size:13.5px;line-height:13.5px;color:#1A1A1A;font-weight:normal;transform:scaleX(0.9122);-webkit-text-stroke:0.25px #1A1A1A;">2300153463</div>
<div class="t" style="left:237.30px;top:552.57px;font-size:13.5px;line-height:13.5px;color:#1A1A1A;font-weight:normal;transform:scaleX(1.0142);-webkit-text-stroke:0.25px #1A1A1A;">Cerezo Chriguay Andy Alexander</div>
<div class="t" style="left:486.80px;top:552.57px;font-size:13.5px;line-height:13.5px;color:#1A1A1A;font-weight:normal;transform:scaleX(0.9930);-webkit-text-stroke:0.25px #1A1A1A;clip-path:inset(0 1.5px 0 0);">9 de Octubre</div>
<div class="t" style="left:566.50px;top:552.57px;font-size:13.5px;line-height:13.5px;color:#1A1A1A;font-weight:normal;transform:scaleX(0.9322);-webkit-text-stroke:0.25px #1A1A1A;">0991319052</div>
<svg style="left:120px;top:548px;" width="6.5" height="6.5" viewBox="0 0 6.5 6.5"><polygon points="0,0 6.5,0 0,6.5" fill="#0F7F12"/></svg>
<svg style="left:564px;top:548px;" width="6.5" height="6.5" viewBox="0 0 6.5 6.5"><polygon points="0,0 6.5,0 0,6.5" fill="#0F7F12"/></svg>
<div class="t" style="left:102.70px;top:572.57px;font-size:13.5px;line-height:13.5px;color:#1A1A1A;font-weight:normal;transform:scaleX(0.9846);-webkit-text-stroke:0.25px #1A1A1A;">11</div>
<div class="t" style="left:123.00px;top:572.57px;font-size:13.5px;line-height:13.5px;color:#1A1A1A;font-weight:normal;transform:scaleX(0.9122);-webkit-text-stroke:0.25px #1A1A1A;">2300154958</div>
<div class="t" style="left:237.30px;top:572.57px;font-size:13.5px;line-height:13.5px;color:#1A1A1A;font-weight:normal;transform:scaleX(0.9906);-webkit-text-stroke:0.25px #1A1A1A;">Jimenez Rugel Jairon David</div>
<div class="t" style="left:486.80px;top:572.57px;font-size:13.5px;line-height:13.5px;color:#1A1A1A;font-weight:normal;transform:scaleX(0.9930);-webkit-text-stroke:0.25px #1A1A1A;clip-path:inset(0 1.5px 0 0);">9 de Octubre</div>
<div class="t" style="left:566.50px;top:572.57px;font-size:13.5px;line-height:13.5px;color:#1A1A1A;font-weight:normal;transform:scaleX(0.9447);-webkit-text-stroke:0.25px #1A1A1A;">0959542811</div>
<svg style="left:120px;top:568px;" width="6.5" height="6.5" viewBox="0 0 6.5 6.5"><polygon points="0,0 6.5,0 0,6.5" fill="#0F7F12"/></svg>
<svg style="left:564px;top:568px;" width="6.5" height="6.5" viewBox="0 0 6.5 6.5"><polygon points="0,0 6.5,0 0,6.5" fill="#0F7F12"/></svg>
<div class="t" style="left:102.70px;top:592.57px;font-size:13.5px;line-height:13.5px;color:#1A1A1A;font-weight:normal;transform:scaleX(0.9181);-webkit-text-stroke:0.25px #1A1A1A;">12</div>
<div class="t" style="left:123.00px;top:592.57px;font-size:13.5px;line-height:13.5px;color:#1A1A1A;font-weight:normal;transform:scaleX(0.9122);-webkit-text-stroke:0.25px #1A1A1A;">2300155328</div>
<div class="t" style="left:237.30px;top:592.57px;font-size:13.5px;line-height:13.5px;color:#1A1A1A;font-weight:normal;transform:scaleX(0.9981);-webkit-text-stroke:0.25px #1A1A1A;">Zambrano Arevalo Luis Santiago</div>
<div class="t" style="left:486.80px;top:592.57px;font-size:13.5px;line-height:13.5px;color:#1A1A1A;font-weight:normal;transform:scaleX(0.9930);-webkit-text-stroke:0.25px #1A1A1A;clip-path:inset(0 1.5px 0 0);">9 de Octubre</div>
<div class="t" style="left:566.50px;top:592.57px;font-size:13.5px;line-height:13.5px;color:#1A1A1A;font-weight:normal;transform:scaleX(0.9322);-webkit-text-stroke:0.25px #1A1A1A;">0939091718</div>
<svg style="left:120px;top:588px;" width="6.5" height="6.5" viewBox="0 0 6.5 6.5"><polygon points="0,0 6.5,0 0,6.5" fill="#0F7F12"/></svg>
<svg style="left:564px;top:588px;" width="6.5" height="6.5" viewBox="0 0 6.5 6.5"><polygon points="0,0 6.5,0 0,6.5" fill="#0F7F12"/></svg>
<div class="t" style="left:102.70px;top:612.57px;font-size:13.5px;line-height:13.5px;color:#1A1A1A;font-weight:normal;transform:scaleX(0.9181);-webkit-text-stroke:0.25px #1A1A1A;">13</div>
<div class="t" style="left:123.00px;top:612.57px;font-size:13.5px;line-height:13.5px;color:#1A1A1A;font-weight:normal;transform:scaleX(0.9122);-webkit-text-stroke:0.25px #1A1A1A;">1725734857</div>
<div class="t" style="left:237.30px;top:612.57px;font-size:13.5px;line-height:13.5px;color:#1A1A1A;font-weight:normal;transform:scaleX(0.9833);-webkit-text-stroke:0.25px #1A1A1A;">Alava Leones María Fernanda</div>
<div class="t" style="left:486.80px;top:612.57px;font-size:13.5px;line-height:13.5px;color:#1A1A1A;font-weight:normal;transform:scaleX(0.9930);-webkit-text-stroke:0.25px #1A1A1A;clip-path:inset(0 1.5px 0 0);">9 de Octubre</div>
<div class="t" style="left:566.50px;top:612.57px;font-size:13.5px;line-height:13.5px;color:#1A1A1A;font-weight:normal;transform:scaleX(0.9447);-webkit-text-stroke:0.25px #1A1A1A;">0959542811</div>
<svg style="left:120px;top:608px;" width="6.5" height="6.5" viewBox="0 0 6.5 6.5"><polygon points="0,0 6.5,0 0,6.5" fill="#0F7F12"/></svg>
<svg style="left:564px;top:608px;" width="6.5" height="6.5" viewBox="0 0 6.5 6.5"><polygon points="0,0 6.5,0 0,6.5" fill="#0F7F12"/></svg>
<div style="left:233px;top:567px;width:252px;height:22px;background:transparent;border:2px solid #217346"></div>
<div style="left:481px;top:585px;width:5px;height:5px;background:#217346;border:1px solid #fff"></div>
<svg style="left:56px;top:223px;" width="330" height="40" viewBox="0 0 330 40"><g transform="translate(-56 -223)"><ellipse cx="72.2" cy="232.5" rx="10.9" ry="15.3" fill="#179C3C"/><path d="M66 218 L79 218 L75 228.5 L70 228.5 Z" fill="#E8413B"/><ellipse cx="72.3" cy="234.2" rx="4.3" ry="5.6" fill="none" stroke="#A8F0A0" stroke-width="1.3"/><text x="84.6" y="235.6" font-family="Liberation Sans" font-weight="bold" font-size="19" fill="#24508A" textLength="69.3" lengthAdjust="spacingAndGlyphs">SANTO DOMINGO</text><text x="84.6" y="243.8" font-family="Liberation Sans" font-weight="bold" font-size="8.4" fill="#DE5A66" textLength="69.3" lengthAdjust="spacingAndGlyphs">DE LOS TSACHILAS</text><path d="M164.3 237.8 L164.3 232 Q164.3 218 202.6 218 Q241 218 241 232 L241 237.8 Z" fill="#1E8AE6"/><path d="M167 237.8 L172 228 L186 226 L200 224 L222 226 L236 230 L239.7 237.8 Z" fill="#6BBE2E"/><path d="M171 224 Q178 219 186 222 L184 228 Q177 230 172 228 Z" fill="#F08A2A"/><path d="M199 237.8 Q212 234 227 237.8 Z" fill="#6FB4F0"/><path d="M203 226 L218 226 L219 233 L203.5 233 Z" fill="#5B9FD4" opacity="0.75"/><path d="M167.5 237.5 Q204 208 239.5 237.5" fill="none" stroke="#8A4A1F" stroke-width="2.2"/><path d="M171 236.5 Q204 214 236 236.5" fill="none" stroke="#9A5A2A" stroke-width="1"/><text x="165.6" y="246.3" font-family="Liberation Sans" font-weight="bold" font-size="9.5" fill="#C84B3C" textLength="75" lengthAdjust="spacing">Valle Hermoso</text><rect x="214" y="238.8" width="26" height="1.6" fill="#9A8A80" opacity="0.6"/><path d="M296.32 241.58 A14.3 14.3 0 0 1 288.17 237.07 L292.63 233.05 A8.3 8.3 0 0 0 297.36 235.67 Z" fill="#3C5DAE"/><path d="M287.85 236.69 A14.3 14.3 0 0 1 284.55 226.25 L290.53 226.78 A8.3 8.3 0 0 0 292.44 232.84 Z" fill="#3B5CB0"/><path d="M312.40 231.92 A14.3 14.3 0 0 1 306.38 239.63 L303.20 234.54 A8.3 8.3 0 0 0 306.69 230.06 Z" fill="#E02A2A"/><path d="M305.95 239.88 A14.3 14.3 0 0 1 296.81 241.66 L297.64 235.72 A8.3 8.3 0 0 0 302.95 234.69 Z" fill="#E02F2F"/><text x="296.7" y="229.4" font-family="Liberation Sans" font-size="15.5" fill="#2B2B2B" stroke="#2B2B2B" stroke-width="0.4" textLength="73.3" lengthAdjust="spacingAndGlyphs">conagopare</text><text x="312.9" y="239.4" font-family="Liberation Sans" font-size="4.6" fill="#555" textLength="57.6" lengthAdjust="spacingAndGlyphs">Santo Domingo de los Tsachilas</text></g></svg>
<div class="t" style="left:454.50px;top:231.80px;font-size:13px;line-height:13px;color:#333333;font-weight:bold;transform:scaleX(0.9859);">Puerto Limón</div>
<div class="t" style="left:568.00px;top:231.80px;font-size:13px;line-height:13px;color:#333333;font-weight:bold;transform:scaleX(0.9689);">El esfuerzo</div>
<div class="t" style="left:684.00px;top:231.80px;font-size:13px;line-height:13px;color:#333333;font-weight:bold;transform:scaleX(1.0111);">Valle Hermoso</div>
<div class="t" style="left:804.90px;top:231.80px;font-size:13px;line-height:13px;color:#333333;font-weight:bold;transform:scaleX(0.9410);">Las Villegas</div>
<div class="t" style="left:924.60px;top:231.80px;font-size:13px;line-height:13px;color:#333333;font-weight:bold;transform:scaleX(1.0531);">Monterrey</div>
<div style="left:491px;top:222px;width:2px;height:4px;background:#333;"></div>
<div style="left:1346px;top:222px;width:19px;height:457px;background:#EDEDED;"></div>
<div style="left:1345px;top:222px;width:1px;height:457px;background:#ABABAB;"></div>
<div style="left:1349px;top:205px;width:15px;height:15px;background:#FFFFFF;border:1px solid #ABABAB"></div>
<svg style="left:1352px;top:209px;" width="9" height="6" viewBox="0 0 9 6"><polygon points="0,5 9,5 4.5,0.5" fill="#222"/></svg>
<div style="left:1349px;top:259px;width:15px;height:406px;background:#FFFFFF;border:1px solid #ABABAB"></div>
<div style="left:1349px;top:665px;width:15px;height:14px;background:#FFFFFF;border:1px solid #ABABAB"></div>
<svg style="left:1352px;top:669px;" width="9" height="6" viewBox="0 0 9 6"><polygon points="0,0.5 9,0.5 4.5,5" fill="#222"/></svg>
<div style="left:0px;top:679px;width:1365px;height:28px;background:#E6E6E6;"></div>
<div style="left:0px;top:679px;width:1345px;height:1px;background:#A8A8A8;"></div>
<svg style="left:26px;top:689px;" width="5" height="8" viewBox="0 0 5 8"><polygon points="5,0 5,8 0,4" fill="#B5B5B5"/></svg>
<svg style="left:55px;top:689px;" width="5" height="8" viewBox="0 0 5 8"><polygon points="0,0 0,8 5,4" fill="#B5B5B5"/></svg>
<div style="left:100px;top:684px;width:1px;height:19px;background:#9E9E9E;"></div>
<div style="left:163px;top:684px;width:1px;height:19px;background:#9E9E9E;"></div>
<div style="left:226px;top:684px;width:1px;height:19px;background:#9E9E9E;"></div>
<div class="t" style="left:113.20px;top:687.14px;font-size:12px;line-height:12px;color:#444;font-weight:normal;transform:scaleX(0.9892);">Fase I</div>
<div class="t" style="left:176.30px;top:687.14px;font-size:12px;line-height:12px;color:#444;font-weight:normal;transform:scaleX(0.9813);">Fase II</div>
<div class="t" style="left:239.40px;top:687.14px;font-size:12px;line-height:12px;color:#444;font-weight:normal;transform:scaleX(1.0714);">Hoja2</div>
<div style="left:286px;top:679px;width:60px;height:25px;background:#FFFFFF;border-left:1px solid #A8A8A8;border-right:1px solid #A8A8A8"></div>
<div style="left:286px;top:702px;width:60px;height:2px;background:#2B6E47;"></div>
<div class="t" style="left:298.50px;top:687.14px;font-size:12px;line-height:12px;color:#217346;font-weight:bold;transform:scaleX(1.0799);">Hoja1</div>
<svg style="left:379px;top:685px;" width="17" height="16" viewBox="0 0 17 16"><circle cx="8" cy="8" r="7.3" fill="none" stroke="#808080" stroke-width="1.1"/><path d="M8 4v8M4 8h8" stroke="#555" stroke-width="1.8"/></svg>
<div style="left:819px;top:688px;width:1.5px;height:1.5px;background:#A0A0A0;"></div>
<div style="left:819px;top:692px;width:1.5px;height:1.5px;background:#A0A0A0;"></div>
<div style="left:819px;top:696px;width:1.5px;height:1.5px;background:#A0A0A0;"></div>
<div style="left:851px;top:686px;width:445px;height:15px;background:#FFFFFF;border:1px solid #ABABAB"></div>
<div style="left:837px;top:686px;width:15px;height:15px;background:#FFFFFF;border:1px solid #ABABAB"></div>
<svg style="left:841px;top:690px;" width="6" height="8" viewBox="0 0 6 8"><polygon points="6,0 6,8 1,4" fill="#222"/></svg>
<div style="left:1331px;top:686px;width:15px;height:15px;background:#FFFFFF;border:1px solid #ABABAB"></div>
<svg style="left:1336px;top:690px;" width="6" height="8" viewBox="0 0 6 8"><polygon points="0,0 0,8 5,4" fill="#222"/></svg>
<div style="left:0px;top:707px;width:1365px;height:1px;background:#C8C8C8;"></div>
<div style="left:0px;top:708px;width:1365px;height:20px;background:#F3F3F3;"></div>
<div class="t" style="left:6.80px;top:712.34px;font-size:12px;line-height:12px;color:#444;font-weight:normal;transform:scaleX(0.9227);">Listo</div>
<div class="t" style="left:69.20px;top:712.34px;font-size:12px;line-height:12px;color:#444;font-weight:normal;transform:scaleX(0.9457);">Accesibilidad: es necesario investigar</div>
<div style="left:1067px;top:708px;width:39px;height:20px;background:#C8C8C8;"></div>
<div class="t" style="left:1332.80px;top:711.64px;font-size:12px;line-height:12px;color:#333;font-weight:normal;transform:scaleX(0.8533);">100%</div>
<div style="left:1206px;top:717px;width:100px;height:1px;background:#555;"></div>
<div style="left:1254px;top:712px;width:5px;height:12px;background:#555;"></div>
<div style="left:1192.5px;top:717px;width:8px;height:1.3px;background:#555;"></div>
<div style="left:1310.5px;top:717px;width:8px;height:1.3px;background:#555;"></div>
<div style="left:1313.8px;top:713.5px;width:1.3px;height:8px;background:#555;"></div>
<div style="left:0px;top:728px;width:1365px;height:1px;background:#FFFFFF;"></div>
<div style="left:0px;top:729px;width:1365px;height:5px;background:#2A2A2A;"></div>
<div style="left:441px;top:729px;width:48px;height:5px;background:#585858;"></div>
<div style="left:1362px;top:729px;width:1px;height:5px;background:#8A8A8A;"></div>
<svg style="left:22px;top:10px;" width="14" height="14" viewBox="0 0 14 14"><path d="M0.5 0.5h13v13h-13z" fill="#fff"/><rect x="2.3" y="1.3" width="9.4" height="6.2" fill="#217346"/><rect x="4" y="9.3" width="6" height="4.2" fill="#217346"/><rect x="5.6" y="10.4" width="1.6" height="3.1" fill="#fff"/></svg>
<svg style="left:50px;top:9px;" width="17" height="15" viewBox="0 0 17 15"><path d="M3 6.5h7a4.2 4.2 0 0 1 0 8.4h-1" fill="none" stroke="#7EAE90" stroke-width="1.6"/><path d="M6.5 2.5L2.5 6.5l4 4" fill="none" stroke="#7EAE90" stroke-width="1.6"/></svg>
<svg style="left:72.5px;top:14.5px;" width="5" height="3" viewBox="0 0 5 3"><polyline points="0.5,0.5 2.5,2.5 4.5,0.5" fill="none" stroke="#7EAE90" stroke-width="1"/></svg>
<svg style="left:89px;top:9px;" width="17" height="15" viewBox="0 0 17 15"><path d="M14 6.5h-7a4.2 4.2 0 0 0 0 8.4h1" fill="none" stroke="#7EAE90" stroke-width="1.6"/><path d="M10.5 2.5l4 4-4 4" fill="none" stroke="#7EAE90" stroke-width="1.6"/></svg>
<svg style="left:111.5px;top:14.5px;" width="5" height="3" viewBox="0 0 5 3"><polyline points="0.5,0.5 2.5,2.5 4.5,0.5" fill="none" stroke="#7EAE90" stroke-width="1"/></svg>
<svg style="left:132px;top:13px;" width="7" height="8" viewBox="0 0 7 8"><rect x="0.5" y="0.5" width="6" height="1.3" fill="#fff"/><polygon points="0.3,3.2 6.7,3.2 3.5,7" fill="#fff"/></svg>
<svg style="left:1199px;top:9px;" width="14" height="12" viewBox="0 0 14 12"><rect x="0.5" y="0.5" width="13" height="10.5" fill="none" stroke="#fff" stroke-width="1"/><path d="M0.5 2.5h13" stroke="#fff"/><path d="M7 9.5V4.2M4.8 6.3L7 4.1l2.2 2.2" fill="none" stroke="#fff" stroke-width="1"/></svg>
<div style="left:1247px;top:14px;width:10px;height:1px;background:#fff;"></div>
<svg style="left:1292px;top:10px;" width="12" height="11" viewBox="0 0 12 11"><rect x="0.5" y="2.5" width="8" height="8" fill="none" stroke="#fff" rx="1"/><path d="M2.5 2.5V1.5a1 1 0 0 1 1-1h7a1 1 0 0 1 1 1v7a1 1 0 0 1-1 1h-1" fill="none" stroke="#fff"/></svg>
<svg style="left:1338px;top:10px;" width="12" height="11" viewBox="0 0 12 11"><path d="M0.8 0.5L11.2 10.5M11.2 0.5L0.8 10.5" stroke="#fff" stroke-width="1.1"/></svg>
<svg style="left:658px;top:41px;" width="14" height="17" viewBox="0 0 14 17"><path d="M4.6 11.5C4.6 9.2 1.3 8.3 1.3 5.8A5.7 5.3 0 0 1 12.7 5.8C12.7 8.3 9.4 9.2 9.4 11.5z" fill="none" stroke="#E3F3E6" stroke-width="1.2"/><path d="M4.8 13.3h4.4M5.6 15.4h2.8" stroke="#E3F3E6" stroke-width="1.2"/></svg>
<svg style="left:1336px;top:40px;" width="17" height="16" viewBox="0 0 17 16"><path d="M0.6 0.6h15.8v10.2H5.5L2.8 14.6v-3.8H0.6z" fill="none" stroke="#fff" stroke-width="1.1" stroke-linejoin="round"/></svg>
<svg style="left:16px;top:71px;" width="31" height="32" viewBox="0 0 31 32"><rect x="1" y="4" width="24" height="25" fill="#D4D4D4"/><rect x="6" y="4" width="14" height="4" fill="#A9A9A9"/><rect x="10" y="1.2" width="6" height="3.5" rx="1" fill="#A9A9A9"/><circle cx="13" cy="3.5" r="0.9" fill="#eee"/><path d="M15.5 12.5h9l4.5 4.5v13.5h-13.5z" fill="#F9F9F9" stroke="#ABABAB" stroke-width="1"/><path d="M24.5 12.5v4.5h4.5" fill="none" stroke="#ABABAB"/></svg>
<svg style="left:53px;top:69px;" width="16" height="17" viewBox="0 0 16 17"><path d="M3.2 0.8L9.8 10.2M12.8 0.8L6.2 10.2" stroke="#555" stroke-width="1.5"/><circle cx="4.6" cy="12.9" r="2.6" fill="#fff" stroke="#5B8ED6" stroke-width="1.2"/><circle cx="11.6" cy="12.9" r="2.6" fill="#fff" stroke="#5B8ED6" stroke-width="1.2"/></svg>
<svg style="left:53px;top:94px;" width="16" height="15" viewBox="0 0 16 15"><path d="M0.5 0.5h5l2 2v8h-7z" fill="#fff" stroke="#444"/><path d="M6.5 3.5h5.5l3.5 3.5v7.5h-9z" fill="#fff" stroke="#444"/><rect x="1.5" y="3" width="3.5" height="1" fill="#5A8DBE"/><rect x="1.5" y="5" width="3.5" height="1" fill="#5A8DBE"/><rect x="1.5" y="7" width="3.5" height="1" fill="#5A8DBE"/><rect x="8" y="8" width="5.5" height="1" fill="#5A8DBE"/><rect x="8" y="10" width="5.5" height="1" fill="#5A8DBE"/><rect x="8" y="12" width="5.5" height="1" fill="#5A8DBE"/></svg>
<svg style="left:52px;top:116px;" width="18" height="16" viewBox="0 0 18 16"><path d="M11 7.5L15.5 3" stroke="#5A5A5A" stroke-width="3.2"/><path d="M0.8 7.5L8.5 5.5 12 9 9.5 15z" fill="#DDB867"/></svg>
<svg style="left:217px;top:85px;" width="6" height="3.5" viewBox="0 0 6 3.5"><polygon points="0,0 6,0 3,3.2" fill="#555"/></svg>
<svg style="left:262px;top:85px;" width="6" height="3.5" viewBox="0 0 6 3.5"><polygon points="0,0 6,0 3,3.2" fill="#555"/></svg>
<div class="t" style="left:280.50px;top:79.30px;font-size:15px;line-height:15px;color:#444;font-weight:normal;transform:scaleX(1.0484);">A</div>
<svg style="left:289px;top:78px;" width="6" height="4" viewBox="0 0 6 4"><polygon points="0,3.5 6,3.5 3,0" fill="#3F73B5"/></svg>
<div class="t" style="left:305.00px;top:81.84px;font-size:12px;line-height:12px;color:#444;font-weight:normal;transform:scaleX(1.0979);">A</div>
<svg style="left:312px;top:79px;" width="6" height="4" viewBox="0 0 6 4"><polygon points="0,0 6,0 3,3.5" fill="#3F73B5"/></svg>
<svg style="left:202px;top:110px;" width="14" height="14" viewBox="0 0 14 14"><rect x="0" y="0" width="1" height="1" fill="#777"/><rect x="2" y="0" width="1" height="1" fill="#777"/><rect x="4" y="0" width="1" height="1" fill="#777"/><rect x="6" y="0" width="1" height="1" fill="#777"/><rect x="8" y="0" width="1" height="1" fill="#777"/><rect x="10" y="0" width="1" height="1" fill="#777"/><rect x="12" y="0" width="1" height="1" fill="#777"/><rect x="0" y="2" width="1" height="1" fill="#777"/><rect x="6" y="2" width="1" height="1" fill="#777"/><rect x="12" y="2" width="1" height="1" fill="#777"/><rect x="0" y="4" width="1" height="1" fill="#777"/><rect x="6" y="4" width="1" height="1" fill="#777"/><rect x="12" y="4" width="1" height="1" fill="#777"/><rect x="0" y="6" width="1" height="1" fill="#777"/><rect x="2" y="6" width="1" height="1" fill="#777"/><rect x="4" y="6" width="1" height="1" fill="#777"/><rect x="6" y="6" width="1" height="1" fill="#777"/><rect x="8" y="6" width="1" height="1" fill="#777"/><rect x="10" y="6" width="1" height="1" fill="#777"/><rect x="12" y="6" width="1" height="1" fill="#777"/><rect x="0" y="8" width="1" height="1" fill="#777"/><rect x="6" y="8" width="1" height="1" fill="#777"/><rect x="12" y="8" width="1" height="1" fill="#777"/><rect x="0" y="10" width="1" height="1" fill="#777"/><rect x="6" y="10" width="1" height="1" fill="#777"/><rect x="12" y="10" width="1" height="1" fill="#777"/><rect x="0" y="12" width="14" height="1" fill="#555"/></svg>
<svg style="left:246px;top:108px;" width="20" height="18" viewBox="0 0 20 18"><path d="M8 3.5l5.5 5.5-5 5-5.5-5.5z" fill="#fff" stroke="#555" stroke-width="1.2"/><path d="M6.5 5.5V1.5h2v3" fill="none" stroke="#555" stroke-width="1"/><path d="M13.8 5c2.2 0.8 3 3 2.2 5.5l-2-1.5z" fill="#3F73B5"/><rect x="1" y="12.5" width="16.5" height="4.5" fill="#EEEE10"/></svg>
<div class="t" style="left:289.50px;top:109.15px;font-size:14px;line-height:14px;color:#555;font-weight:bold;transform:scaleX(0.9877);">A</div>
<div style="left:286px;top:121px;width:16px;height:4px;background:#D40000;"></div>
<div style="left:340px;top:78px;width:14px;height:1px;background:#555555;"></div>
<div style="left:340px;top:81px;width:14px;height:1px;background:#555555;"></div>
<div style="left:340px;top:84px;width:14px;height:1px;background:#555555;"></div>
<div style="left:364px;top:82px;width:14px;height:1px;background:#555555;"></div>
<div style="left:364px;top:85px;width:14px;height:1px;background:#555555;"></div>
<div style="left:364px;top:88px;width:14px;height:1px;background:#555555;"></div>
<div style="left:388px;top:87px;width:14px;height:1px;background:#555555;"></div>
<div style="left:388px;top:90px;width:14px;height:1px;background:#555555;"></div>
<div style="left:388px;top:93px;width:14px;height:1px;background:#555555;"></div>
<div style="left:340px;top:112px;width:14px;height:1px;background:#555555;"></div>
<div style="left:364.0px;top:112px;width:14px;height:1px;background:#555555;"></div>
<div style="left:388px;top:112px;width:14px;height:1px;background:#555555;"></div>
<div style="left:340px;top:115px;width:10px;height:1px;background:#555555;"></div>
<div style="left:366.0px;top:115px;width:10px;height:1px;background:#555555;"></div>
<div style="left:392px;top:115px;width:10px;height:1px;background:#555555;"></div>
<div style="left:340px;top:118px;width:14px;height:1px;background:#555555;"></div>
<div style="left:364.0px;top:118px;width:14px;height:1px;background:#555555;"></div>
<div style="left:388px;top:118px;width:14px;height:1px;background:#555555;"></div>
<div style="left:340px;top:121px;width:10px;height:1px;background:#555555;"></div>
<div style="left:366.0px;top:121px;width:10px;height:1px;background:#555555;"></div>
<div style="left:392px;top:121px;width:10px;height:1px;background:#555555;"></div>
<div style="left:418px;top:110px;width:16px;height:1px;background:#555555;"></div>
<div style="left:427px;top:113px;width:7px;height:1px;background:#555555;"></div>
<div style="left:427px;top:116px;width:7px;height:1px;background:#555555;"></div>
<div style="left:427px;top:119px;width:7px;height:1px;background:#555555;"></div>
<div style="left:418px;top:122px;width:16px;height:1px;background:#555555;"></div>
<svg style="left:418px;top:113px;" width="8" height="7" viewBox="0 0 8 7"><path d="M3.5 0.5L0.5 3.5l3 3M1 3.5h6.5" fill="#3F73B5" stroke="#3F73B5" stroke-width="1.6"/></svg>
<div style="left:442px;top:110px;width:16px;height:1px;background:#555555;"></div>
<div style="left:451px;top:113px;width:7px;height:1px;background:#555555;"></div>
<div style="left:451px;top:116px;width:7px;height:1px;background:#555555;"></div>
<div style="left:451px;top:119px;width:7px;height:1px;background:#555555;"></div>
<div style="left:442px;top:122px;width:16px;height:1px;background:#555555;"></div>
<svg style="left:442px;top:113px;" width="8" height="7" viewBox="0 0 8 7"><path d="M4.5 0.5l3 3-3 3M0.5 3.5H7" fill="#3F73B5" stroke="#3F73B5" stroke-width="1.6"/></svg>
<svg style="left:417px;top:78px;" width="18" height="16" viewBox="0 0 18 16"><g transform="rotate(-45 8 8)"><text x="2" y="10" font-size="10" font-family="Liberation Sans" fill="#444">ab</text></g><path d="M6 14.5L15.5 5M12.5 4.5H16v3.5" fill="none" stroke="#444" stroke-width="1.1"/></svg>
<svg style="left:474px;top:76px;" width="14" height="18" viewBox="0 0 14 18"><text x="0" y="8" font-size="9.5" font-family="Liberation Sans" fill="#444">ab</text><text x="0" y="16.5" font-size="9.5" font-family="Liberation Sans" fill="#444">c</text><path d="M7 12.5h4.5v-2" fill="none" stroke="#3F73B5" stroke-width="1.2"/></svg>
<svg style="left:473px;top:108px;" width="16" height="16" viewBox="0 0 16 16"><rect x="0.5" y="0.5" width="15" height="15" fill="#fff" stroke="#555"/><path d="M0.5 4.5h15M0.5 11.5h15M8 0.5v4M8 11.5v4" stroke="#555"/><path d="M3 8h10M5 6l-2 2 2 2M11 6l2 2-2 2" fill="none" stroke="#3F73B5"/></svg>
<svg style="left:763px;top:85px;" width="6" height="3.5" viewBox="0 0 6 3.5"><polygon points="0,0 6,0 3,3.2" fill="#555"/></svg>
<div class="t" style="left:640.50px;top:109.46px;font-size:16px;line-height:16px;color:#555;font-weight:normal;transform:scaleX(0.9544);">$</div>
<div class="t" style="left:677.50px;top:110.30px;font-size:15px;line-height:15px;color:#444;font-weight:normal;transform:scaleX(0.9742);">%</div>
<div class="t" style="left:699.50px;top:112.46px;font-size:9.5px;line-height:9.5px;color:#444;font-weight:bold;transform:scaleX(0.9773);">000</div>
<svg style="left:730px;top:110px;" width="16" height="15" viewBox="0 0 16 15"><text x="8" y="6.5" font-size="8" font-family="Liberation Sans" fill="#444">0</text><text x="2.5" y="13" font-size="8" font-family="Liberation Sans" fill="#444">,00</text><path d="M1 4h6M3.5 1.5L1 4l2.5 2.5" fill="none" stroke="#3F73B5" stroke-width="1.4"/></svg>
<svg style="left:754px;top:110px;" width="16" height="15" viewBox="0 0 16 15"><text x="5.5" y="6.5" font-size="8" font-family="Liberation Sans" fill="#444">,00</text><text x="10" y="13" font-size="8" font-family="Liberation Sans" fill="#444">0</text><path d="M1 10.5h7M5.5 8l2.5 2.5-2.5 2.5" fill="none" stroke="#3F73B5" stroke-width="1.4"/></svg>
<svg style="left:814px;top:72px;" width="32" height="31" viewBox="0 0 32 31"><rect x="0.5" y="0.5" width="28" height="24" fill="#fff" stroke="#7A7A7A"/><rect x="8" y="1" width="6" height="5.5" fill="#D9603B"/><rect x="8" y="7" width="11" height="5.5" fill="#3F73B5"/><rect x="8" y="13" width="8" height="5.5" fill="#D9603B"/><rect x="8" y="19" width="4" height="5" fill="#3F73B5"/><path d="M7.5 0.5v24M14.5 0.5v24M21.5 0.5v24M0.5 6.5h28M0.5 12.5h28M0.5 18.5h28" stroke="#7A7A7A"/><rect x="15.5" y="17.5" width="15" height="12.5" fill="#fff" stroke="#7A7A7A"/><path d="M19.5 22.2h7M19.5 25.2h7M25 20l-4 7.5" stroke="#333" stroke-width="1.1"/></svg>
<svg style="left:892px;top:74px;" width="34" height="30" viewBox="0 0 34 30"><rect x="0.5" y="0.5" width="25" height="20" fill="#fff" stroke="#7A7A7A"/><rect x="7" y="6" width="18.5" height="14.5" fill="#C3D5EA"/><path d="M7.5 0.5v20M13.5 0.5v20M19.5 0.5v20M0.5 5.5h25M0.5 10.5h25M0.5 15.5h25" stroke="#7A7A7A" stroke-opacity="0.8"/><path d="M30 6L20 18.5" stroke="#7A7A7A" stroke-width="3.4"/><path d="M20 18.5m-2 -1l4 3c-2 5 -7 7 -14 7c1 -5 4 -9 10 -10z" fill="#3F73B5"/></svg>
<svg style="left:958px;top:72px;" width="34" height="30" viewBox="0 0 34 30"><rect x="0.5" y="0.5" width="25.5" height="21" fill="#fff" stroke="#7A7A7A"/><rect x="6" y="5" width="15.5" height="10.5" fill="#C3D5EA"/><path d="M5.5 0.5v21M21.5 0.5v21M0.5 5.5h25.5M0.5 15.5h25.5" stroke="#7A7A7A" stroke-opacity="0.8"/><path d="M29 6.5L19.5 18.5" stroke="#7A7A7A" stroke-width="3.4"/><path d="M19.5 18.5m-2 -1l4 3c-2 5 -7 7 -14 7c1 -5 4 -9 10 -10z" fill="#3F73B5"/></svg>
<svg style="left:1016px;top:69px;" width="18" height="18" viewBox="0 0 18 18"><path d="M0.5 0.5h9v4h-9zM0.5 11.5h9v5.5h-9zM5 0.5v4M5 11.5v5.5M0.5 14h9" fill="#fff" stroke="#6E6E6E"/><path d="M8.5 5.5h9v4.5h-9zM13 5.5v4.5" fill="#fff" stroke="#6E6E6E"/><path d="M0.5 5.5v6M9.5 4.5v1M9.5 10v1.5" stroke="#6E6E6E"/><path d="M1.5 7.8h7M4.2 5.2L1.5 7.8l2.7 2.6" fill="none" stroke="#3F73B5" stroke-width="1.6"/></svg>
<svg style="left:1016px;top:92px;" width="18" height="17" viewBox="0 0 18 17"><path d="M0.5 0.5h9v4h-9zM0.5 11.5h9v5h-9zM5 0.5v4M5 11.5v5M0.5 14h9M0.5 4.5v7M9.5 11.5V9" fill="#fff" stroke="#6E6E6E"/><path d="M4.5 5.5h4.5v4h-4.5z" fill="#fff" stroke="#6E6E6E"/><path d="M10.5 4l6 6.5M16.5 4l-6 6.5" stroke="#E0604C" stroke-width="1.5"/></svg>
<svg style="left:1016px;top:116px;" width="16" height="17" viewBox="0 0 16 17"><path d="M0.5 1.8h15M2.5 0v3.5M13.5 0v3.5M2.5 1.8l2-1.3M2.5 1.8l2 1.3M13.5 1.8l-2-1.3M13.5 1.8l-2 1.3" stroke="#3F73B5"/><rect x="0.5" y="4.5" width="15" height="12" fill="#fff" stroke="#6E6E6E"/><path d="M0.5 8.5h15M0.5 12.5h15M5.5 4.5v12M10.5 4.5v12" stroke="#A9A9A9"/><rect x="5" y="8.5" width="5.5" height="4" fill="#3F73B5"/></svg>
<svg style="left:1121px;top:70px;" width="15" height="15" viewBox="0 0 15 15"><path d="M14 2.8V1H1l6.5 6.5L1 14h13v-1.8" fill="none" stroke="#444" stroke-width="2"/></svg>
<svg style="left:1122px;top:93px;" width="14" height="16" viewBox="0 0 14 16"><rect x="0.5" y="0.5" width="13" height="15" fill="#fff" stroke="#555"/><rect x="0.5" y="0.5" width="13" height="2.5" fill="#555"/><path d="M7 5v7M4.2 9.2L7 12l2.8-2.8" fill="none" stroke="#3F73B5" stroke-width="1.6"/></svg>
<svg style="left:1122px;top:117px;" width="14" height="13" viewBox="0 0 14 13"><path d="M9 1l4.5 4.5-7 7L2 8z" fill="#E0768A"/><path d="M2 8L0.8 9.5l3 3h3" fill="#E0768A"/></svg>
<div class="t" style="left:1169.00px;top:71.60px;font-size:15px;line-height:15px;color:#3F73B5;font-weight:bold;transform:scaleX(0.9775);">A</div>
<div class="t" style="left:1169.50px;top:85.50px;font-size:15px;line-height:15px;color:#9B6BC0;font-weight:bold;transform:scaleX(1.0467);">Z</div>
<svg style="left:1181px;top:79.5px;" width="18" height="16" viewBox="0 0 18 16"><path d="M0 0.5h17l-6 6.5v8h-5v-8z" fill="#7A7A7A"/><path d="M7.3 7.5v6.3h2.4V7.5" fill="#fff"/></svg>
<svg style="left:1235px;top:71px;" width="29" height="29" viewBox="0 0 29 29"><circle cx="18.5" cy="10.5" r="8.8" fill="#fff" stroke="#3F73B5" stroke-width="2.6"/><path d="M12 17L2 27" stroke="#3F73B5" stroke-width="3.5" stroke-linecap="round"/></svg>
<svg style="left:150px;top:176px;" width="12" height="10" viewBox="0 0 12 10"><path d="M1 0.5l10 9M11 0.5l-10 9" stroke="#B8B8B8" stroke-width="1.2"/></svg>
<svg style="left:186px;top:176px;" width="14" height="10" viewBox="0 0 14 10"><path d="M0.8 5.5l4 4L13 0.5" fill="none" stroke="#B8B8B8" stroke-width="1.4"/></svg>
<div class="t" style="left:222.50px;top:174.50px;font-family:'Liberation Serif', serif;font-size:13px;line-height:13px;color:#555;font-weight:normal;transform:scaleX(1.2662);font-style:italic;">f</div>
<div class="t" style="left:227.50px;top:177.03px;font-family:'Liberation Serif', serif;font-size:10px;line-height:10px;color:#555;font-weight:normal;transform:scaleX(1.2000);font-style:italic;">x</div>
<svg style="left:84px;top:144px;" width="9" height="9" viewBox="0 0 9 9"><path d="M0.5 6.5V0.5h6" fill="none" stroke="#666"/><path d="M3 3l5 5M8 4.5V8H4.5" fill="none" stroke="#666"/></svg>
<svg style="left:316.5px;top:144px;" width="9" height="9" viewBox="0 0 9 9"><path d="M0.5 6.5V0.5h6" fill="none" stroke="#666"/><path d="M3 3l5 5M8 4.5V8H4.5" fill="none" stroke="#666"/></svg>
<svg style="left:613.3px;top:144px;" width="9" height="9" viewBox="0 0 9 9"><path d="M0.5 6.5V0.5h6" fill="none" stroke="#666"/><path d="M3 3l5 5M8 4.5V8H4.5" fill="none" stroke="#666"/></svg>
<svg style="left:769px;top:144px;" width="9" height="9" viewBox="0 0 9 9"><path d="M0.5 6.5V0.5h6" fill="none" stroke="#666"/><path d="M3 3l5 5M8 4.5V8H4.5" fill="none" stroke="#666"/></svg>
<svg style="left:49px;top:710px;" width="18" height="16" viewBox="0 0 18 16"><path d="M7.5 1v5M4.5 4l3 3 3-3" fill="none" stroke="#444" stroke-width="1.1"/><path d="M4 3.5a6 6 0 1 0 8.5 8" fill="none" stroke="#444" stroke-width="1.2" stroke-dasharray="2 1.2"/><path d="M9.5 9.5l7 6M16.5 9.5l-7 6" stroke="#333" stroke-width="1.6"/></svg>
<svg style="left:1080px;top:711px;" width="14" height="13" viewBox="0 0 14 13"><rect x="0.5" y="0.5" width="13" height="12" fill="none" stroke="#666"/><path d="M0.5 4.5h13M0.5 8.5h13M4.8 0.5v12M9.2 0.5v12" stroke="#666"/></svg>
<svg style="left:1119px;top:711px;" width="15" height="13" viewBox="0 0 15 13"><rect x="0.5" y="0.5" width="14" height="12" fill="none" stroke="#666"/><rect x="3.5" y="2.5" width="8" height="8" fill="none" stroke="#666"/><path d="M5 5h5M5 7h5M5 9h5" stroke="#666"/></svg>
<svg style="left:1159px;top:711px;" width="15" height="13" viewBox="0 0 15 13"><rect x="0.5" y="0.5" width="14" height="12" fill="none" stroke="#666"/><path d="M3.5 0.5v6h4v-6M7.5 6.5h7" fill="none" stroke="#666"/></svg>
</body></html>
